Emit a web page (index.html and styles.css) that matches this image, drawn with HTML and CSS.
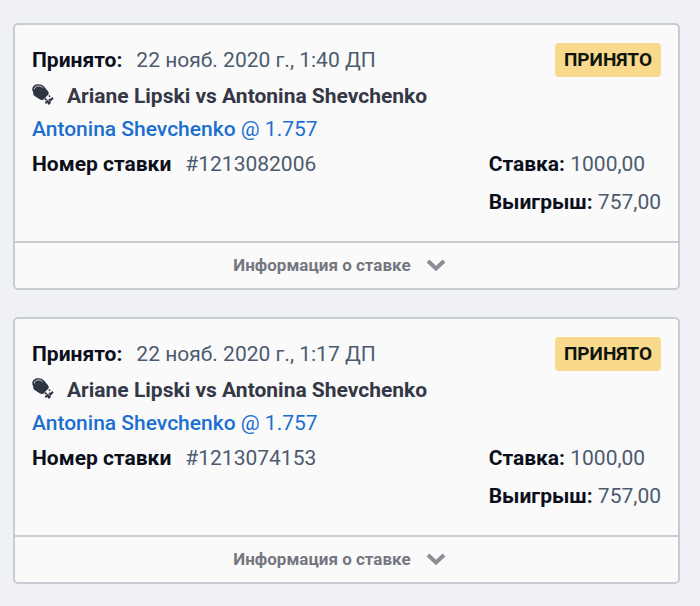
FILE: index.html
```html
<!DOCTYPE html>
<html lang="ru">
<head>
  <meta charset="utf-8">
  <title>Ставки</title>
  <meta name="viewport" content="width=device-width, initial-scale=1">
  <link rel="stylesheet" href="styles.css">
</head>
<body>
  <svg class="sprite" width="0" height="0">
    <symbol id="glove" viewBox="0 0 22 22">
      <path fill="#2e3442" d="M.3 5C.4 2 3.200.2 6.500.3C9 .3 11.200 1.300 12.600 3.200L16.200 7.400C17 8.700 17 9.800 16.200 10.700L11.800 15.200C10.600 16.300 9.400 16.300 8 15.600L2.600 12C1.200 11 .900 9.600 1.400 8.500C.600 7.400.300 6.400.3 5Z"/>
      <path fill="none" stroke="#fafafa" stroke-width=".8" d="M2.200 5.400C2.600 3.200 4.200 1.900 6.600 2C8.200 2 9.600 2.600 10.600 3.800"/>
      <path fill="none" stroke="#2e3442" stroke-width="2" d="M13 16L14.400 14.600M13.400 19.300L15.600 17.200L17.600 18.800L16.200 20.200M17 12.600L18 11.600M17.200 14.800L18.400 16.400L21 13.800"/>
    </symbol>
    <symbol id="chevron" viewBox="0 0 20 14">
      <path fill="none" stroke="#8b8e97" stroke-width="4" d="M2 3L10 10.500L18 3"/>
    </symbol>
  </svg>

  <main class="bets">
    <article class="bet">
      <div class="bet-body">
        <div class="bet-header">
          <div><b>Принято:</b><span class="value">22 нояб. 2020 г., 1:40 ДП</span></div>
          <span class="badge">ПРИНЯТО</span>
        </div>
        <div class="match">
          <svg class="glove"><use href="#glove"/></svg>
          <span>Ariane Lipski vs Antonina Shevchenko</span>
        </div>
        <div class="pick"><span class="pick-name">Antonina Shevchenko</span> @ 1.757</div>
        <div class="bet-details">
          <div class="number"><b>Номер ставки</b><span class="value">#1213082006</span></div>
          <div class="amounts">
            <div class="stake"><b>Ставка:</b> 1000,00</div>
            <div class="win"><b>Выигрыш:</b> 757,00</div>
          </div>
        </div>
      </div>
      <button type="button" class="bet-info">
        Информация о ставке
        <svg class="chevron"><use href="#chevron"/></svg>
      </button>
    </article>

    <article class="bet">
      <div class="bet-body">
        <div class="bet-header">
          <div><b>Принято:</b><span class="value">22 нояб. 2020 г., 1:17 ДП</span></div>
          <span class="badge">ПРИНЯТО</span>
        </div>
        <div class="match">
          <svg class="glove"><use href="#glove"/></svg>
          <span>Ariane Lipski vs Antonina Shevchenko</span>
        </div>
        <div class="pick"><span class="pick-name">Antonina Shevchenko</span> @ 1.757</div>
        <div class="bet-details">
          <div class="number"><b>Номер ставки</b><span class="value">#1213074153</span></div>
          <div class="amounts">
            <div class="stake"><b>Ставка:</b> 1000,00</div>
            <div class="win"><b>Выигрыш:</b> 757,00</div>
          </div>
        </div>
      </div>
      <button type="button" class="bet-info">
        Информация о ставке
        <svg class="chevron"><use href="#chevron"/></svg>
      </button>
    </article>
  </main>
</body>
</html>
```
FILE: styles.css
```css
* {
  box-sizing: border-box;
}
body {
  margin: 0;
  background-color: #eff1f6;
  font-family: Roboto, sans-serif;
  font-size: 21px;
  color: #4c5a6f;
}
.sprite {
  display: none;
}
.bets {
  display: flex;
  flex-direction: column;
  gap: 27px;
  padding: 23px 20px 22px 13px;
}
.bet {
  border: 2px solid #c9cbd3;
  border-radius: 5px;
  background-color: #fafafa;
}
.bet-body {
  padding: 18px 17px 22px;
}
b {
  font-weight: 700;
  color: #0b0f1c;
}
.value {
  margin-left: 14px;
}
.bet-header {
  display: flex;
  justify-content: space-between;
  align-items: center;
  line-height: 34px;
}
.badge {
  padding: 0 9px;
  border-radius: 4px;
  background-color: #f9d98c;
  color: #11150f;
  font-size: 19px;
  font-weight: 700;
}
.match {
  display: flex;
  align-items: center;
  gap: 13px;
  line-height: 38px;
  font-weight: 700;
  color: #343846;
}
.glove {
  width: 22px;
  height: 22px;
  margin-bottom: 3px;
}
.pick {
  line-height: 28px;
  color: #1c6fd0;
}
.pick-name {
  font-weight: 500;
}
.bet-details {
  display: flex;
  justify-content: space-between;
}
.number,
.stake {
  line-height: 42px;
}
.win {
  line-height: 34px;
}
.bet-info {
  display: flex;
  justify-content: center;
  align-items: center;
  gap: 15px;
  width: 100%;
  height: 47px;
  padding: 0 14px 1px 0;
  border: 0;
  border-top: 2px solid #c9cbd3;
  background: none;
  font-family: inherit;
  font-size: 17px;
  font-weight: 700;
  color: #747780;
  cursor: pointer;
}
.chevron {
  width: 20px;
  height: 14px;
}
```
